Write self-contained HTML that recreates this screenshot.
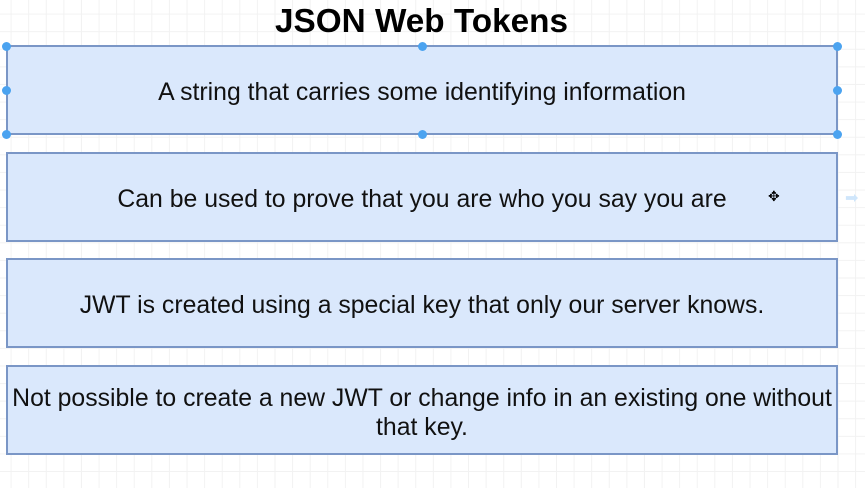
<!DOCTYPE html><html><head><style>
body{margin:0;width:865px;height:488px;overflow:hidden;background:#fff;
background-image:linear-gradient(#f2f2f2 1px,transparent 1px),linear-gradient(90deg,#f2f2f2 1px,transparent 1px);background-size:17.6px 17.6px;background-position:-7px -4px;font-family:"Liberation Sans",sans-serif;position:relative}
.t{position:absolute;left:0;width:843px;top:3px;text-align:center;font-weight:bold;font-size:33.3px;color:#000}
.b{position:absolute;left:6px;width:828px;background:#dae8fc;border:2px solid #7a96c6;display:flex;align-items:center;justify-content:center;text-align:center;font-size:24.8px;color:#111;line-height:29px;padding-top:4px;box-sizing:content-box;height:82px}
.d{position:absolute;width:9px;height:9px;border-radius:50%;background:#4ba3f0}
</style></head><body>
<div class="t">JSON Web Tokens</div>
<div class="b" style="top:45px">A string that carries some identifying information</div>
<div class="b" style="top:152px">Can be used to prove that you are who you say you are</div>
<div class="b" style="top:258px">JWT is created using a special key that only our server knows.</div>
<div class="b" style="top:365px;padding-top:5px;height:81px">Not possible to create a new JWT or change info in an existing one without that key.</div>
<div class="d" style="left:2px;top:42px"></div><div class="d" style="left:418px;top:42px"></div><div class="d" style="left:833px;top:42px"></div>
<div class="d" style="left:2px;top:86px"></div><div class="d" style="left:833px;top:86px"></div>
<div class="d" style="left:2px;top:130px"></div><div class="d" style="left:418px;top:130px"></div><div class="d" style="left:833px;top:130px"></div>
<div style="position:absolute;left:768px;top:188px;font-size:14px">✥</div>
<div style="position:absolute;left:845px;top:188px;color:#cfe6fb;font-size:16px">➡</div>
</body></html>
